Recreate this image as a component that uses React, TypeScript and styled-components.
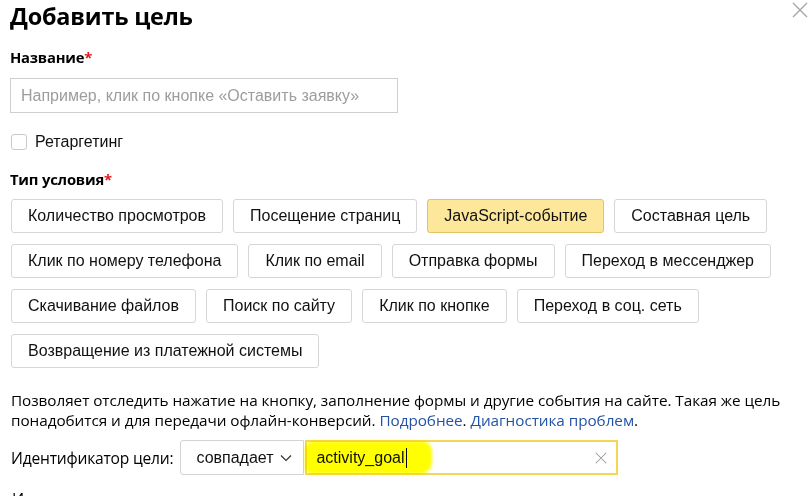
import React from "react";
import styled, { createGlobalStyle } from "styled-components";

const Global = createGlobalStyle`
  html, body { margin: 0; padding: 0; background: #fff; overflow: hidden; }
  body { font-family: "Liberation Sans", Arial, sans-serif; color: #000; }
`;

const Page = styled.div`
  width: 810px;
  height: 496px;
  padding: 0 0 0 10px;
  box-sizing: border-box;
  position: relative;
  overflow: hidden;
`;

const Header = styled.div`
  display: flex;
  justify-content: space-between;
  align-items: flex-start;
  padding-right: 2px;
`;

const Title = styled.h1`
  margin: 0;
  padding-top: 1px;
  font-family: "Open Sans", sans-serif;
  font-weight: 700;
  font-size: 23.4px;
  line-height: 30px;
  letter-spacing: -0.2px;
`;

const Close = styled.button`
  border: 0;
  background: none;
  padding: 0;
  margin-top: 2px;
  width: 16px;
  height: 16px;
  display: flex;
`;

const Label = styled.div<{ $top: number }>`
  margin-top: ${(p) => p.$top}px;
  font-family: "Open Sans", sans-serif;
  font-weight: 700;
  font-size: 14.8px;
  line-height: 20px;
  letter-spacing: -0.2px;
`;

const Star = styled.span`
  color: #e3161a;
`;

const TextInput = styled.input`
  margin-top: 11px;
  display: block;
  width: 388px;
  height: 35px;
  box-sizing: border-box;
  border: 1px solid #cfcfcf;
  padding: 0 10px;
  font-family: "Liberation Sans", Arial, sans-serif;
  font-size: 16px;
  outline: none;
  &::placeholder { color: #9d9d9d; }
`;

const CheckRow = styled.label`
  margin-top: 20px;
  display: flex;
  align-items: center;
  gap: 8px;
  font-size: 16px;
  padding-left: 1px;
  height: 18px;
  color: #111;
`;

const Box = styled.span`
  width: 16px;
  height: 16px;
  border: 1px solid #c9c9c9;
  border-radius: 3px;
  box-sizing: border-box;
`;

const Grid = styled.div`
  margin-top: 10px;
  display: flex;
  flex-direction: column;
  gap: 11px;
  padding-left: 1px;
`;

const Row = styled.div`
  display: flex;
  gap: 10px;
`;

const Chip = styled.button<{ $active?: boolean }>`
  height: 34px;
  padding: 0 16px;
  border-radius: 3px;
  border: 1px solid ${(p) => (p.$active ? "#e2c462" : "#d6d6d6")};
  background: ${(p) => (p.$active ? "#fde79b" : "#fff")};
  font-family: "Liberation Sans", Arial, sans-serif;
  font-size: 16px;
  color: #111;
  white-space: nowrap;
`;

const Desc = styled.p`
  margin: 22px 0 0 1px;
  font-family: "Open Sans", sans-serif;
  font-size: 15.3px;
  line-height: 20px;
  letter-spacing: -0.05px;
  white-space: nowrap;
`;

const Link = styled.a`
  color: #2353a5;
  text-decoration: none;
`;

const IdRow = styled.div`
  margin-top: 10px;
  display: flex;
  align-items: center;
  padding-left: 1px;
`;

const IdLabel = styled.span`
  font-family: "Open Sans", sans-serif;
  font-size: 15.6px;
  letter-spacing: -0.2px;
  margin-right: 7px;
`;

const Select = styled.div`
  height: 35px;
  box-sizing: border-box;
  border: 1px solid #d3d3d3;
  border-radius: 3px 0 0 3px;
  display: flex;
  align-items: center;
  gap: 6px;
  padding: 0 10px 0 15px;
  font-size: 16px;
  width: 124px;
  color: #111;
`;

const Field = styled.div`
  position: relative;
  margin-left: 1px;
  width: 313px;
  height: 35px;
  box-sizing: border-box;
  border: 2px solid #f6d755;
  display: flex;
  align-items: center;
  padding: 0 9px;
  font-size: 16px;
`;

const Value = styled.span`
  color: #111;
  border-right: 1.5px solid #000;
  padding-right: 1px;
  line-height: 20px;
`;

const Marker = styled.span`
  position: absolute;
  left: -2px;
  top: -1px;
  width: 127px;
  height: 33px;
  background: #ffff00;
  border-radius: 8px 10px 12px 6px;
  filter: blur(1.5px);
  mix-blend-mode: multiply;
  pointer-events: none;
`;

const ClearBtn = styled.span`
  margin-left: auto;
  display: flex;
`;

const Cut = styled.div`
  margin-top: 14px;
  padding-left: 2px;
  font-family: "Open Sans", sans-serif;
  font-size: 16px;
  line-height: 20px;
`;

const rows: string[][] = [
  ["Количество просмотров", "Посещение страниц", "JavaScript-событие", "Составная цель"],
  ["Клик по номеру телефона", "Клик по email", "Отправка формы", "Переход в мессенджер"],
  ["Скачивание файлов", "Поиск по сайту", "Клик по кнопке", "Переход в соц. сеть"],
  ["Возвращение из платежной системы"],
];

const Cross = ({ size, color }: { size: number; color: string }) => (
  <svg width={size} height={size} viewBox="0 0 16 16">
    <path d="M1 1L15 15M15 1L1 15" stroke={color} strokeWidth="1.4" fill="none" />
  </svg>
);

export default function App() {
  return (
    <Page>
      <Global />
      <Header>
        <Title>Добавить цель</Title>
        <Close aria-label="Закрыть">
          <Cross size={16} color="#a6a6a6" />
        </Close>
      </Header>
      <Label $top={16}>
        Название<Star>*</Star>
      </Label>
      <TextInput placeholder="Например, клик по кнопке «Оставить заявку»" />
      <CheckRow>
        <Box />
        Ретаргетинг
      </CheckRow>
      <Label $top={18}>
        Тип условия<Star>*</Star>
      </Label>
      <Grid>
        {rows.map((r, i) => (
          <Row key={i}>
            {r.map((t) => (
              <Chip key={t} $active={t === "JavaScript-событие"}>
                {t}
              </Chip>
            ))}
          </Row>
        ))}
      </Grid>
      <Desc>
        Позволяет отследить нажатие на кнопку, заполнение формы и другие события на сайте. Такая же цель
        <br />
        понадобится и для передачи офлайн-конверсий. <Link href="#">Подробнее</Link>.{" "}
        <Link href="#">Диагностика проблем</Link>.
      </Desc>
      <IdRow>
        <IdLabel>Идентификатор цели:</IdLabel>
        <Select>
          совпадает
          <svg width="12" height="8" viewBox="0 0 12 8">
            <path d="M1 1.5L6 6.5L11 1.5" stroke="#333" strokeWidth="1.2" fill="none" />
          </svg>
        </Select>
        <Field>
          <Value>activity_goal</Value>
          <Marker />
          <ClearBtn>
            <Cross size={12} color="#9a9a9a" />
          </ClearBtn>
        </Field>
      </IdRow>
      <Cut>Использовать условие «и»</Cut>
    </Page>
  );
}
